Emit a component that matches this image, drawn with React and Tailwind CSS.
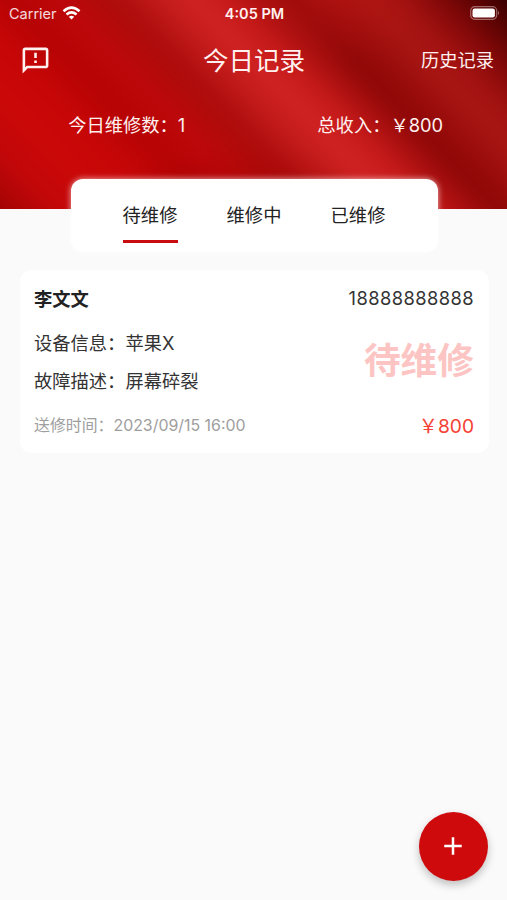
import React, { useState } from 'react'
import { MdOutlineFeedback, MdAdd } from 'react-icons/md'

const TABS = ['待维修', '维修中', '已维修']

const RECORDS = [
  { name: '李文文', phone: '18888888888', device: '苹果X', fault: '屏幕碎裂', time: '2023/09/15 16:00', price: 800, status: 0 },
]

export default function App() {
  const [tab, setTab] = useState(0)
  const total = RECORDS.reduce((sum, r) => sum + r.price, 0)

  return (
    <div className="relative flex h-[900px] w-[507px] flex-col overflow-hidden bg-[#fafafa] font-['Inter','Noto_Sans_CJK_SC',sans-serif] text-[18.3px] leading-6 text-[#222]">
      <header className="relative isolate h-[209px] shrink-0 overflow-hidden text-[#fff1ef]">
        {/* silk folds */}
        <div className="absolute -inset-5 -z-10 bg-[radial-gradient(ellipse_130px_60px_at_260px_225px,rgba(160,2,2,0.55),transparent),radial-gradient(ellipse_110px_80px_at_345px_10px,rgba(185,20,18,0.6),transparent),linear-gradient(46deg,#a40404_5%,#c20709_12%,#cb0808_19%,#c60607_26%,#b60304_32%,#be080a_38%,#b10a0a_43%,#ae0e0e_46%,#c01919_50%,#d02222_55%,#c61a1a_60%,#a90f0f_64%,#8e0707_68%,#990c0b_72%,#a81613_77%,#a31311_81%,#860909_86%,#5c0303_91%,#340000_96%)] blur-[7px]" />
        <StatusBar />
        <div className="grid h-16 grid-cols-[1fr_auto_1fr] items-center pl-5 pr-[13px]">
          <MdOutlineFeedback className="size-[31px]" />
          <h1 className="-translate-x-[3px] translate-y-px text-center text-[25.5px] leading-8">今日记录</h1>
          <button className="text-right">历史记录</button>
        </div>
        <div className="grid h-[66px] grid-cols-2 items-center text-center">
          <p>今日维修数：1</p>
          <p>总收入：￥{total}</p>
        </div>
      </header>

      <nav className="relative -mt-[30px] ml-[70.5px] flex h-[73px] w-[367px] shrink-0 justify-center gap-[49px] rounded-xl bg-white pt-6 shadow-[0_0_6px_rgba(255,255,255,0.7)]">
        {TABS.map((t, i) => (
          <button key={t} onClick={() => setTab(i)} className="flex h-[39.5px] flex-col items-center justify-between">
            {t}
            <span className={`h-[2.5px] w-[55px] ${i === tab ? 'bg-[#c90c10]' : 'bg-transparent'}`} />
          </button>
        ))}
      </nav>

      <main className="flex flex-col gap-4 pl-5 pr-[18px] pt-[18px]">
        {RECORDS.filter(r => r.status === tab).map(r => <RecordCard key={r.phone} record={r} />)}
      </main>

      <button className="absolute right-[19.5px] bottom-[19.5px] flex size-[69px] items-center justify-center rounded-full bg-[#cf0a0d] text-white shadow-[0_4px_8px_rgba(0,0,0,0.24)]">
        <MdAdd className="size-[30px]" />
      </button>
    </div>
  )
}

function StatusBar() {
  return (
    <div className="grid h-7 grid-cols-3 items-center pr-[7px] pl-[9px] text-[14.5px]">
      <div className="flex items-center gap-[5px] text-white/85">
        Carrier
        <svg viewBox="0 0 18 14" className="-mt-0.5 h-[14px] w-[19px]" fill="none" stroke="#fff" strokeWidth="2.6">
          <path d="M1 5.2 Q9 -1.8 17 5.2" />
          <path d="M4 8.5 Q9 4.3 14 8.5" />
          <path d="M9 13.6 L6.3 10.8 Q9 8.8 11.7 10.8 Z" fill="#fff" stroke="none" />
        </svg>
      </div>
      <span className="text-center font-semibold">4:05 PM</span>
      <svg viewBox="0 0 30 14" className="-mt-0.5 h-[14px] w-[30px] justify-self-end" fill="none">
        <rect x="0.7" y="0.7" width="26" height="12.6" rx="4" stroke="#fff" strokeOpacity="0.4" strokeWidth="1.2" />
        <rect x="2.5" y="2.5" width="22.4" height="9" rx="2.2" fill="#fff" />
        <path d="M28 4.8 Q30 7 28 9.2 Z" fill="#fff" fillOpacity="0.45" />
      </svg>
    </div>
  )
}

function RecordCard({ record }) {
  return (
    <article className="h-[183px] rounded-xl bg-white pl-[14px] pr-[15px] pt-[17px]">
      <div className="flex justify-between">
        <h2 className="font-bold">{record.name}</h2>
        <span className="-mt-px tracking-[0.45px] text-[#333]">{record.phone}</span>
      </div>
      <div className="mt-5 flex items-center justify-between text-[#333]">
        <div className="flex flex-col gap-[14px]">
          <p>设备信息：{record.device}</p>
          <p>故障描述：{record.fault}</p>
        </div>
        <strong className="-mt-0.5 text-[36.7px] font-bold text-[#fcc5c3]">{TABS[record.status]}</strong>
      </div>
      <div className="mt-[21px] flex items-center justify-between">
        <span className="text-[15.9px] text-[#9e9e9e]">送修时间：{record.time}</span>
        <span className="text-[19.2px] text-[#f44336]">￥{record.price}</span>
      </div>
    </article>
  )
}
